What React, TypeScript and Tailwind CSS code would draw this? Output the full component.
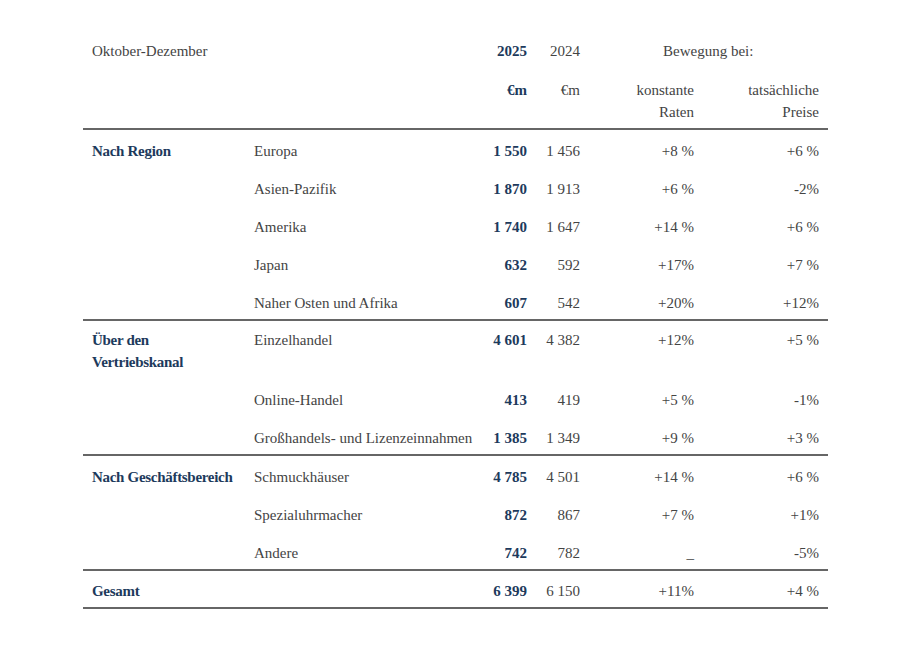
const navy = "text-[#1d3a5c]";

interface Row {
  group?: string[];
  label: string;
  cur: string;
  prev: string;
  konst: string;
  tats: string;
  pt?: string;
}

const sections: Row[][] = [
  [
    { group: ["Nach Region"], label: "Europa", cur: "1 550", prev: "1 456", konst: "+8 %", tats: "+6 %" },
    { label: "Asien-Pazifik", cur: "1 870", prev: "1 913", konst: "+6 %", tats: "-2%" },
    { label: "Amerika", cur: "1 740", prev: "1 647", konst: "+14 %", tats: "+6 %" },
    { label: "Japan", cur: "632", prev: "592", konst: "+17%", tats: "+7 %" },
    { label: "Naher Osten und Afrika", cur: "607", prev: "542", konst: "+20%", tats: "+12%" },
  ],
  [
    {
      group: ["Über den", "Vertriebskanal"],
      label: "Einzelhandel",
      cur: "4 601",
      prev: "4 382",
      konst: "+12%",
      tats: "+5 %",
      pt: "pt-[8px]",
    },
    { label: "Online-Handel", cur: "413", prev: "419", konst: "+5 %", tats: "-1%" },
    { label: "Großhandels- und Lizenzeinnahmen", cur: "1 385", prev: "1 349", konst: "+9 %", tats: "+3 %" },
  ],
  [
    { group: ["Nach Geschäftsbereich"], label: "Schmuckhäuser", cur: "4 785", prev: "4 501", konst: "+14 %", tats: "+6 %" },
    { label: "Spezialuhrmacher", cur: "872", prev: "867", konst: "+7 %", tats: "+1%" },
    { label: "Andere", cur: "742", prev: "782", konst: "_", tats: "-5%" },
  ],
  [{ group: ["Gesamt"], label: "", cur: "6 399", prev: "6 150", konst: "+11%", tats: "+4 %", pt: "pt-[9px]" }],
];

const gridCols = "grid grid-cols-[171px_226px_47px_53px_114px_125px]";

function DataRow({ row, last }: { row: Row; last: boolean }) {
  return (
    <div className={`${gridCols} ${row.pt ?? "pt-[10px]"} ${last ? "pb-[5px]" : "pb-[6px]"} leading-[22px]`}>
      <div className={`pl-[9px] font-bold tracking-[-0.02em] ${navy}`}>
        {row.group?.map((g) => (
          <div key={g}>{g}</div>
        ))}
      </div>
      <div className="whitespace-nowrap">{row.label}</div>
      <div className={`text-right font-bold ${navy}`}>{row.cur}</div>
      <div className="text-right">{row.prev}</div>
      <div className="text-right">{row.konst}</div>
      <div className="text-right">{row.tats}</div>
    </div>
  );
}

export default function App() {
  return (
    <div className="min-h-screen bg-white pt-[40px] pl-[83px] font-['Liberation_Serif',serif] text-[15px] text-[#444]">
      <div className="w-[745px]">
        <div className="border-b-2 border-[#666] pb-[5px] leading-[22px]">
          <div className={gridCols}>
            <div className="pl-[9px]">Oktober-Dezember</div>
            <div />
            <div className={`text-right font-bold ${navy}`}>2025</div>
            <div className="text-right">2024</div>
            <div className="col-span-2 pl-[83px]">Bewegung bei:</div>
          </div>
          <div className={`${gridCols} mt-[17px]`}>
            <div />
            <div />
            <div className={`text-right font-bold ${navy}`}>€m</div>
            <div className="text-right">€m</div>
            <div className="text-right">
              konstante
              <br />
              Raten
            </div>
            <div className="text-right">
              tatsächliche
              <br />
              Preise
            </div>
          </div>
        </div>
        {sections.map((rows, i) => (
          <div key={i} className="border-b-2 border-[#666]">
            {rows.map((r, j) => (
              <DataRow key={r.label + r.cur} row={r} last={j === rows.length - 1} />
            ))}
          </div>
        ))}
      </div>
    </div>
  );
}
